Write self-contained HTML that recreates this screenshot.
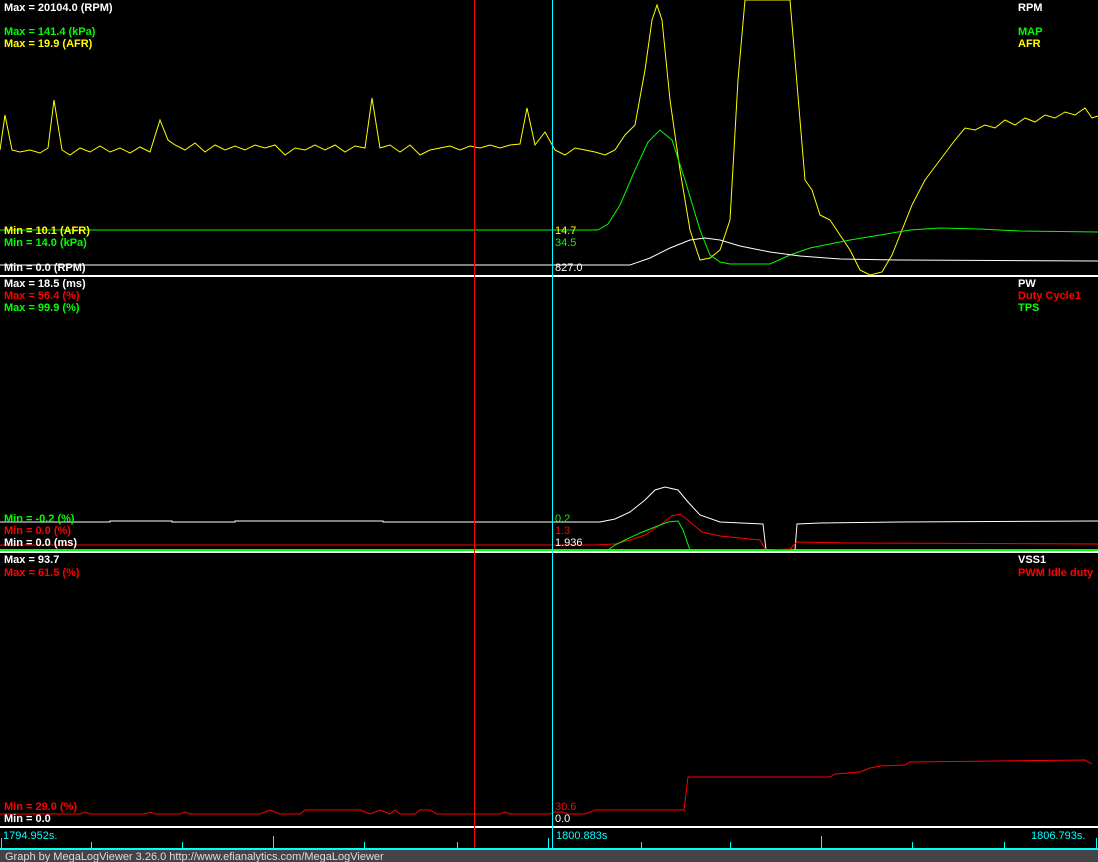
<!DOCTYPE html>
<html><head><meta charset="utf-8"><style>
html,body{margin:0;padding:0;background:#000;width:1098px;height:862px;overflow:hidden}
svg{display:block}
text{font-family:"Liberation Sans",Arial,sans-serif;font-size:11px}
.b{font-weight:bold}
</style></head><body>
<svg width="1098" height="862" viewBox="0 0 1098 862">
<rect width="1098" height="862" fill="#000"/>
<!-- separators -->
<rect x="0" y="275" width="1098" height="2" fill="#fff"/>
<rect x="0" y="549" width="1098" height="2" fill="#0f0"/>
<rect x="0" y="551" width="1098" height="2" fill="#fff"/>
<rect x="0" y="826" width="1098" height="2" fill="#fff"/>
<!-- panel 1 curves -->
<polyline fill="none" stroke="#ff0" stroke-width="1" points="0,150 5,115 12,150 20,152 30,150 40,153 48,148 54,100 62,150 70,155 80,148 90,152 100,146 110,152 120,148 130,153 140,147 150,152 160,120 168,140 175,145 185,150 195,143 205,152 215,145 225,150 235,146 245,150 255,145 265,148 275,145 285,155 295,148 305,150 315,145 325,150 335,145 345,152 355,146 365,148 372,98 380,148 390,145 400,152 410,145 420,155 430,150 440,148 450,146 460,150 470,146 480,148 490,145 500,148 510,145 520,144 527,108 535,145 545,132 555,150 565,155 575,148 585,150 595,152 605,155 615,150 625,135 635,125 645,70 652,20 657,5 662,20 670,100 680,170 690,230 700,260 710,258 720,250 730,220 738,80 745,0 790,0 795,60 805,180 812,190 820,215 830,220 840,235 850,250 860,270 870,275 882,272 892,255 902,230 912,205 925,180 940,160 955,140 965,128 975,130 985,125 995,128 1005,120 1015,125 1025,118 1035,122 1045,115 1055,118 1065,112 1075,115 1085,108 1092,118 1098,116"/>
<polyline fill="none" stroke="#0f0" stroke-width="1" points="0,230 598,230 608,224 620,205 635,170 648,142 660,130 672,140 685,180 700,230 710,255 720,262 730,264 770,264 790,255 810,248 850,240 880,235 910,230 940,228 980,229 1020,231 1098,232"/>
<polyline fill="none" stroke="#fff" stroke-width="1" points="0,265 630,265 650,258 670,248 690,240 705,238 720,240 740,246 770,252 800,256 840,259 900,260 1098,261"/>
<!-- panel 2 curves -->
<polyline fill="none" stroke="#fff" stroke-width="1" points="0,522 110,522 110,521 172,521 172,522 235,522 235,521 383,521 383,522 600,522 615,519 630,512 645,500 655,490 665,487 678,490 688,502 700,515 720,522 763,524 766,550 795,550 797,524 820,523 900,522 1098,521"/>
<polyline fill="none" stroke="#f00" stroke-width="1" points="0,545 595,545 615,544 630,540 645,535 660,525 672,516 680,514 690,522 702,532 720,536 760,540 766,550 790,549 797,542 850,543 1098,544"/>
<polyline fill="none" stroke="#0f0" stroke-width="1" points="445,550 608,550 615,545 625,540 640,533 655,527 668,522 678,521 683,530 690,550 1098,550"/>
<!-- panel 3 curve -->
<polyline fill="none" stroke="#f00" stroke-width="1" points="0,814 80,814 85,812 90,814 145,814 150,812 155,814 180,814 185,812 190,814 260,814 270,810 280,814 300,814 305,810 310,810 360,810 370,814 380,810 390,814 395,810 400,814 415,814 420,810 430,810 437,814 500,814 505,812 510,814 550,814 555,812 562,812 568,814 585,814 590,812 595,810 684,810 688,777 830,777 835,774 860,772 870,768 880,766 905,765 910,762 1085,760 1092,764"/>
<!-- cursor lines -->
<rect x="474" y="0" width="1" height="850" fill="#f00"/>
<rect x="552" y="0" width="1" height="850" fill="#0ff"/>
<!-- axis -->
<rect x="0" y="848" width="1098" height="2" fill="#0ff"/>
<g fill="#0ff">
<rect x="1" y="838" width="1" height="11"/><rect x="91" y="842" width="1" height="7"/><rect x="182" y="842" width="1" height="7"/><rect x="273" y="836" width="1" height="13"/><rect x="364" y="842" width="1" height="7"/><rect x="457" y="842" width="1" height="7"/><rect x="548" y="838" width="1" height="11"/><rect x="641" y="842" width="1" height="7"/><rect x="730" y="842" width="1" height="7"/><rect x="821" y="836" width="1" height="13"/><rect x="912" y="842" width="1" height="7"/><rect x="1004" y="842" width="1" height="7"/><rect x="1096" y="838" width="1" height="11"/>
</g>
<text x="3" y="839" fill="#0ff">1794.952s.</text>
<text x="556" y="839" fill="#0ff">1800.883s</text>
<text x="1031" y="839" fill="#0ff">1806.793s.</text>
<rect x="0" y="850" width="1098" height="12" fill="#444"/>
<text x="5" y="860" fill="#ddd">Graph by MegaLogViewer 3.26.0 http://www.efianalytics.com/MegaLogViewer</text>
<!-- labels panel 1 -->
<text class="b" x="4" y="11" fill="#fff">Max = 20104.0 (RPM)</text>
<text class="b" x="4" y="35" fill="#0f0">Max = 141.4 (kPa)</text>
<text class="b" x="4" y="47" fill="#ff0">Max = 19.9 (AFR)</text>
<text class="b" x="1018" y="11" fill="#fff">RPM</text>
<text class="b" x="1018" y="35" fill="#0f0">MAP</text>
<text class="b" x="1018" y="47" fill="#ff0">AFR</text>
<text class="b" x="4" y="234" fill="#ff0">Min = 10.1 (AFR)</text>
<text class="b" x="4" y="246" fill="#0f0">Min = 14.0 (kPa)</text>
<text class="b" x="4" y="271" fill="#fff">Min = 0.0 (RPM)</text>
<text x="555" y="234" fill="#ff0">14.7</text>
<text x="555" y="246" fill="#0f0">34.5</text>
<text x="555" y="271" fill="#fff">827.0</text>
<!-- labels panel 2 -->
<text class="b" x="4" y="287" fill="#fff">Max = 18.5 (ms)</text>
<text class="b" x="4" y="299" fill="#f00">Max = 56.4 (%)</text>
<text class="b" x="4" y="311" fill="#0f0">Max = 99.9 (%)</text>
<text class="b" x="1018" y="287" fill="#fff">PW</text>
<text class="b" x="1018" y="299" fill="#f00">Duty Cycle1</text>
<text class="b" x="1018" y="311" fill="#0f0">TPS</text>
<text class="b" x="4" y="522" fill="#0f0">Min = -0.2 (%)</text>
<text class="b" x="4" y="534" fill="#f00">Min = 0.0 (%)</text>
<text class="b" x="4" y="546" fill="#fff">Min = 0.0 (ms)</text>
<text x="555" y="522" fill="#0f0">0.2</text>
<text x="555" y="534" fill="#f00">1.3</text>
<text x="555" y="546" fill="#fff">1.936</text>
<!-- labels panel 3 -->
<text class="b" x="4" y="563" fill="#fff">Max = 93.7</text>
<text class="b" x="4" y="576" fill="#f00">Max = 61.5 (%)</text>
<text class="b" x="1018" y="563" fill="#fff">VSS1</text>
<text class="b" x="1018" y="576" fill="#f00">PWM Idle duty</text>
<text class="b" x="4" y="810" fill="#f00">Min = 29.0 (%)</text>
<text class="b" x="4" y="822" fill="#fff">Min = 0.0</text>
<text x="555" y="810" fill="#f00">30.6</text>
<text x="555" y="822" fill="#fff">0.0</text>
</svg>
</body></html>
